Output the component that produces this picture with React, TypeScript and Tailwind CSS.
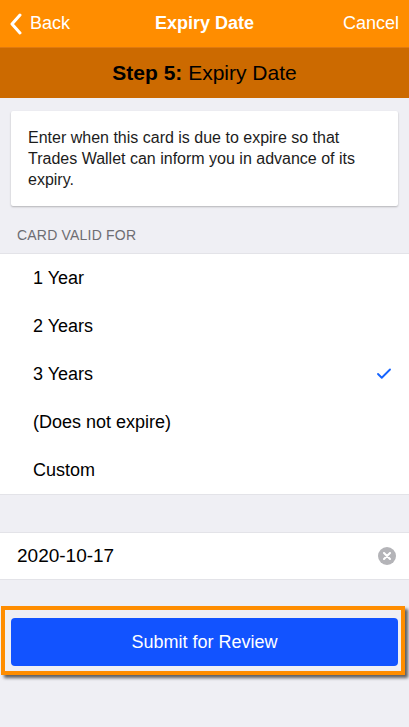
import { Check } from 'lucide-react';

const opciones = ['1 Year', '2 Years', '3 Years', '(Does not expire)', 'Custom'];

export default function App() {
  const seleccion = '3 Years';

  return (
    <div className="w-[409px] h-[727px] bg-[#efeff4] font-['Liberation_Sans',Arial,sans-serif] overflow-hidden">
      {/* Barra de navegación */}
      <div className="h-[47px] bg-[#ff8d00] flex items-center justify-between px-[10px] text-white text-[18px]">
        <div className="flex items-center gap-[8px] w-[100px]">
          <svg width="12" height="22" viewBox="0 0 12 22" fill="none">
            <path d="M10 2 L2 11 L10 20" stroke="white" strokeWidth="3" strokeLinecap="round" strokeLinejoin="round" />
          </svg>
          <span>Back</span>
        </div>
        <span className="font-bold">Expiry Date</span>
        <span className="w-[100px] text-right">Cancel</span>
      </div>

      {/* Paso actual */}
      <div className="h-[51px] bg-[#cc6a00] border-t border-[#e07a10] flex items-center justify-center text-[21px] text-black">
        <span className="font-bold">Step 5:</span>
        <span>&nbsp;Expiry Date</span>
      </div>

      {/* Tarjeta de ayuda */}
      <div className="mx-[11px] mt-[13px] bg-white rounded-[2px] shadow-[0_1px_2px_rgba(0,0,0,0.25)] px-[17px] py-[16px] text-[16px] leading-[21px] text-[#1c1c1c]">
        Enter when this card is due to expire so that Trades Wallet can inform you in advance of its expiry.
      </div>

      <div className="px-[17px] pt-[21px] pb-[10px] text-[14px] leading-[16px] text-[#6d6d72] tracking-[0.2px]">CARD VALID FOR</div>

      {/* Opciones */}
      <div className="bg-white border-t border-b border-[#e3e3e8]">
        {opciones.map((op) => (
          <div key={op} className="h-[48px] flex items-center justify-between pl-[33px] pr-[16px] text-[18px] text-black">
            <span>{op}</span>
            {op === seleccion && <Check size={18} strokeWidth={2.5} className="text-[#1463ff]" />}
          </div>
        ))}
      </div>

      {/* Fecha */}
      <div className="mt-[37px] h-[48px] bg-white border-t border-b border-[#e3e3e8] flex items-center justify-between pl-[17px] pr-[13px] text-[19px] text-black">
        <span>2020-10-17</span>
        <div className="w-[18px] h-[18px] rounded-full bg-[#b4b4b8] flex items-center justify-center">
          <svg width="8" height="8" viewBox="0 0 8 8">
            <path d="M1 1 L7 7 M7 1 L1 7" stroke="white" strokeWidth="2" strokeLinecap="round" />
          </svg>
        </div>
      </div>

      {/* Botón enviar */}
      <div className="mt-[26px] ml-[1px] w-[404px] border-[4px] border-[#ff8d00] shadow-[3px_3px_3px_rgba(0,0,0,0.6)] pt-[8px] pb-[5px] pl-[6px] pr-[3px]">
        <button className="w-full h-[48px] bg-[#1253ff] rounded-[4px] text-white text-[18px]">Submit for Review</button>
      </div>
    </div>
  );
}
